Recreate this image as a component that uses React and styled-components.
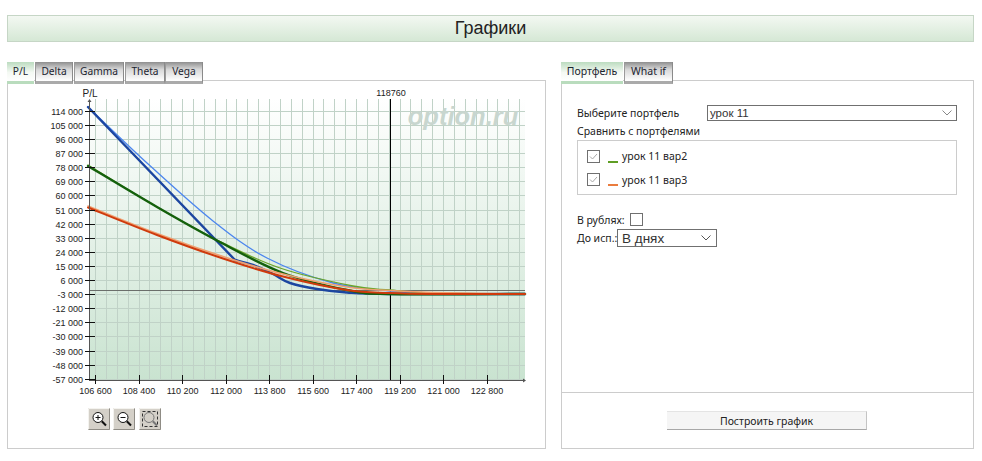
import React from 'react'
import styled, { createGlobalStyle } from 'styled-components'

const GlobalStyle = createGlobalStyle`
  html, body {
    margin: 0;
    padding: 0;
    background: #fff;
    font-family: "Noto Sans", "Liberation Sans", sans-serif;
    color: #222;
  }
`

const Page = styled.div`
  width: 982px;
  height: 461px;
  box-sizing: border-box;
  padding: 15px 8px 0 7px;
  overflow: hidden;
`

const Header = styled.h1`
  margin: 0 0 20px;
  height: 27px;
  box-sizing: border-box;
  border: 1px solid #c6d6c6;
  background: linear-gradient(#f3f8f2, #d5e8d5);
  font: 400 18px/25px "Liberation Sans", sans-serif;
  color: #222;
  text-align: center;
`

const Columns = styled.div`
  display: flex;
  gap: 15px;
  align-items: flex-start;
`

const Column = styled.section`
  width: ${p => p.$width}px;
  flex: none;
`

const TabStrip = styled.div`
  display: flex;
  height: 22px;
  margin-bottom: -4px;
  position: relative;
`

const Tab = styled.div`
  box-sizing: border-box;
  width: ${p => p.$width}px;
  height: 22px;
  margin-right: ${p => p.$gap || 0}px;
  padding-top: 2px;
  text-align: center;
  font: 400 ${p => p.$size || 10.5}px/15px "Noto Sans", sans-serif;
  color: #1c2430;
  border-bottom: 3px solid ${p => (p.$active ? '#b9dcbd' : '#aaaaaa')};
  border-left: ${p => (p.$active ? '0' : '1px solid #9a9a9a')};
  border-right: ${p => (p.$active ? '0' : '1px solid #8a8a8a')};
  background: ${p =>
    p.$active
      ? 'linear-gradient(#bcdcc0, #f4f9f3 55%, #ffffff)'
      : 'linear-gradient(#8f8f8f, #d8d8d8 40%, #ffffff)'};
`

const Panel = styled.div`
  box-sizing: border-box;
  height: 369px;
  border: 1px solid #cccccc;
  display: flex;
  flex-direction: column;
`

const ChartWrap = styled.div`
  height: 366px;
`

const ChartSvg = styled.svg`
  display: block;
  text {
    font: 9px "Liberation Sans", sans-serif;
    fill: #222;
  }
`

const FormBody = styled.div`
  flex: 1;
  padding: 23px 16px 0 15px;
  font: 400 10.5px/14px "Noto Sans", sans-serif;
  color: #222;
`

const FieldRow = styled.div`
  display: flex;
  align-items: center;
  height: ${p => p.$height || 17}px;
`

const RowLabel = styled.span`
  width: ${p => p.$width}px;
  flex: none;
  white-space: nowrap;
`

const SelectBox = styled.div`
  box-sizing: border-box;
  width: ${p => p.$width}px;
  height: ${p => p.$height}px;
  border: 1px solid #707070;
  display: flex;
  align-items: center;
  justify-content: space-between;
  padding: 0 4px 0 ${p => p.$pad}px;
  font: 400 ${p => p.$size}px "Liberation Sans", sans-serif;
  color: #333;
`

const CompareLabel = styled.div`
  height: 19px;
  line-height: 20px;
`

const CompareBox = styled.div`
  box-sizing: border-box;
  height: 55px;
  border: 1px solid #cccccc;
  padding: 9px 9px 0;
  display: flex;
  flex-direction: column;
  gap: 10px;
`

const CompareRow = styled.div`
  display: flex;
  align-items: center;
  height: 13px;
`

const CompareName = styled.span`
  margin-bottom: ${p => p.$lift}px;
`

const Check = styled.span`
  box-sizing: border-box;
  width: 13px;
  height: 13px;
  flex: none;
  border: 1px solid #707070;
  display: flex;
  align-items: center;
  justify-content: center;
  background: #fff;
`

const Swatch = styled.span`
  width: 10px;
  height: 2px;
  margin: 10px 4px 0 8px;
  flex: none;
  background: ${p => p.$color};
`

const RubleRow = styled.div`
  display: flex;
  align-items: center;
  gap: 5px;
  height: 13px;
  margin-top: 18px;
`

const ExpiryRow = styled.div`
  display: flex;
  align-items: center;
  height: 18px;
  margin-top: 3px;
`

const Footer = styled.div`
  height: 56px;
  flex: none;
  box-sizing: border-box;
  border-top: 1px solid #cccccc;
  display: flex;
  justify-content: center;
  padding: 18px 1px 0 0;
`

const BuildButton = styled.button`
  box-sizing: border-box;
  width: 200px;
  height: 19px;
  padding: 0;
  border: 0;
  border-bottom: 1px solid #a8a8a8;
  border-right: 1px solid #c4c4c4;
  border-top: 1px solid #e4e4e4;
  background: #f5f5f5;
  font: 400 10.5px/16px "Noto Sans", sans-serif;
  color: #222;
`

// chart coords match the page, the viewBox shifts them into the panel
const OFFSET_X = 8
const OFFSET_Y = 81

const PLOT = { left: 89, right: 525, top: 99, bottom: 380 }
const yTicks = Array.from({ length: 20 }, (_, i) => 114000 - i * 9000)
const xTicks = Array.from({ length: 10 }, (_, i) => 106600 + i * 1800)
const yAt = v => 111.3 + ((114000 - v) * 268) / 171000
const xAt = v => 95.6 + ((v - 106600) * 43.5) / 1800
const crisp = n => Math.floor(n) + 0.5
const fmt = n => String(n).replace(/\B(?=(\d{3})+(?!\d))/g, ' ')

const smooth = pts => {
  let d = `M${pts[0][0]} ${pts[0][1]}`
  for (let i = 0; i < pts.length - 1; i++) {
    const p0 = pts[i - 1] || pts[i]
    const p1 = pts[i]
    const p2 = pts[i + 1]
    const p3 = pts[i + 2] || p2
    const c1x = p1[0] + (p2[0] - p0[0]) / 6
    const c1y = p1[1] + (p2[1] - p0[1]) / 6
    const c2x = p2[0] - (p3[0] - p1[0]) / 6
    const c2y = p2[1] - (p3[1] - p1[1]) / 6
    d += ` C${c1x} ${c1y} ${c2x} ${c2y} ${p2[0]} ${p2[1]}`
  }
  return d
}

const blueThin = [[88, 107], [147, 163], [213, 221], [267, 258], [333, 283], [390, 291], [433, 293], [525, 294]]
const greenThin = [[88, 165], [157, 207], [217, 240], [280, 268], [353, 286], [390, 290], [433, 293], [525, 294]]
const orangeThin = [[88, 206], [157, 233.5], [223, 256.5], [283, 274], [347, 287], [390, 290.5], [433, 292.5], [525, 294]]
const greenThick = [[88, 166], [157, 207], [217, 240.5], [283, 273], [347, 290], [390, 294], [525, 294]]
const redThick = [[88, 207.5], [157, 235], [223, 258.5], [283, 276.5], [347, 290], [390, 293], [433, 294], [525, 294]]
const blueBend = [[235, 260], [253, 265], [273, 274], [290, 283], [317, 289], [347, 292.5], [390, 294], [525, 294]]

const vGrid = Array.from({ length: 40 }, (_, i) => 95.6 + i * 10.875).filter(x => x <= PLOT.right)

function PlChart() {
  return (
    <ChartSvg width="537" height="366" viewBox={`${OFFSET_X} ${OFFSET_Y} 537 366`}>
      <defs>
        <linearGradient id="plotBg" x1="0" y1="0" x2="0" y2="1">
          <stop offset="0" stopColor="#ffffff" />
          <stop offset="1" stopColor="#c9e3d0" />
        </linearGradient>
      </defs>
      <rect x={PLOT.left} y={PLOT.top} width={PLOT.right - PLOT.left} height={PLOT.bottom - PLOT.top} fill="url(#plotBg)" />

      {yTicks.map(v => (
        <line key={v} x1={PLOT.left} x2={PLOT.right} y1={crisp(yAt(v))} y2={crisp(yAt(v))} stroke="#c0d2c7" />
      ))}
      {vGrid.map(x => (
        <line key={x} x1={crisp(x)} x2={crisp(x)} y1={PLOT.top} y2={PLOT.bottom} stroke="#c0d2c7" />
      ))}

      <text x="463" y="125" textAnchor="middle" style={{ font: 'italic 700 25.5px "Liberation Sans", sans-serif', fill: '#c8d6cf' }}>
        option.ru
      </text>

      <line x1={PLOT.left} x2={PLOT.right} y1="290.5" y2="290.5" stroke="#6b6f6b" />
      <line x1="390.5" x2="390.5" y1={PLOT.top} y2={PLOT.bottom} stroke="#000" />

      <g fill="none" strokeLinecap="round" strokeLinejoin="round">
        <path d={smooth(blueThin)} stroke="#4c86ee" strokeWidth="1.3" />
        <path d={smooth(greenThin)} stroke="#6aa52a" strokeWidth="1.3" />
        <path d="M88 107 L235 260" stroke="#1c46a0" strokeWidth="2.4" />
        <path d={smooth(blueBend)} stroke="#1c46a0" strokeWidth="2.4" />
        <path d={smooth(greenThick)} stroke="#14600c" strokeWidth="2.4" />
        <path d={smooth(orangeThin)} stroke="#f0a070" strokeWidth="1.6" />
        <path d={smooth(redThick)} stroke="#cf3a0c" strokeWidth="2" />
      </g>

      <line x1="89.5" x2="89.5" y1="101" y2="380" stroke="#555" />
      <line x1="89" x2="525" y1="380.5" y2="380.5" stroke="#555" />
      <path d="M87.5 102 L89.5 99 L91.5 102 Z" fill="#555" />
      <path d="M523 378.5 L526 380.5 L523 382.5 Z" fill="#555" />

      {yTicks.map(v => (
        <g key={v}>
          <line x1="85" x2="95" y1={crisp(yAt(v))} y2={crisp(yAt(v))} stroke="#111" />
          <text x="83" y={yAt(v) + 3.5} textAnchor="end">{fmt(v)}</text>
        </g>
      ))}
      {xTicks.map(v => (
        <g key={v}>
          <line x1={crisp(xAt(v))} x2={crisp(xAt(v))} y1="375" y2="384" stroke="#111" />
          <text x={xAt(v)} y="394" textAnchor="middle">{fmt(v)}</text>
        </g>
      ))}

      <text x="90" y="97" textAnchor="middle" style={{ fontSize: '10px' }}>P/L</text>
      <text x="391" y="96" textAnchor="middle">118760</text>

      <ZoomButton x={88} kind="in" />
      <ZoomButton x={113} kind="out" />
      <ZoomButton x={139} kind="box" />
    </ChartSvg>
  )
}

function ZoomButton({ x, kind }) {
  const stroke = kind === 'box' ? '#777' : '#111'
  return (
    <g transform={`translate(${x} 408)`}>
      <rect x="0" y="0" width="22" height="22" fill="#d4d0c8" />
      <path d="M0.5 21.5 V0.5 H21.5" fill="none" stroke="#f4f3ef" />
      <path d="M0.5 21.5 H21.5 V0.5" fill="none" stroke="#8f8c85" />
      {kind === 'box' && (
        <rect x="3.5" y="3.5" width="15" height="15" fill="none" stroke="#333" strokeDasharray="3 2" />
      )}
      <circle cx="10" cy="9.5" r="5" fill={kind === 'box' ? '#d4d0c8' : '#fff'} stroke={stroke} />
      <path d="M13.8 13.3 L18 17.5" stroke={stroke} strokeWidth="2" />
      {kind !== 'box' && <path d="M7.5 9.5 H12.5" stroke="#111" />}
      {kind === 'in' && <path d="M10 7 V12" stroke="#111" />}
    </g>
  )
}

const Tick = () => (
  <svg width="9" height="9" viewBox="0 0 9 9">
    <path d="M1 4.5 L3.5 7 L8 2" fill="none" stroke="#a8a8a8" strokeWidth="1" />
  </svg>
)

const Chevron = ({ w = 10, color = '#888' }) => (
  <svg width={w} height="6" viewBox="0 0 10 6">
    <path d="M0.5 0.5 L5 5 L9.5 0.5" fill="none" stroke={color} strokeWidth="1" />
  </svg>
)

export default function App() {
  return (
    <Page>
      <GlobalStyle />
      <Header>Графики</Header>
      <Columns>
        <Column $width={539}>
          <TabStrip>
            <Tab $active $width={27} $gap={1} $size={10.2}>P/L</Tab>
            <Tab $width={38} $gap={1} $size={10.2}>Delta</Tab>
            <Tab $width={50} $gap={1} $size={10.2}>Gamma</Tab>
            <Tab $width={40} $size={10.2}>Theta</Tab>
            <Tab $width={38} $size={10.2}>Vega</Tab>
          </TabStrip>
          <Panel>
            <ChartWrap>
              <PlChart />
            </ChartWrap>
          </Panel>
        </Column>
        <Column $width={413}>
          <TabStrip>
            <Tab $active $width={62} $gap={1}>Портфель</Tab>
            <Tab $width={49}>What if</Tab>
          </TabStrip>
          <Panel>
            <FormBody>
              <FieldRow>
                <RowLabel $width={130}>Выберите портфель</RowLabel>
                <SelectBox $width={250} $height={16} $pad={2} $size={11.5}>
                  урок 11
                  <Chevron />
                </SelectBox>
              </FieldRow>
              <CompareLabel>Сравнить с портфелями</CompareLabel>
              <CompareBox>
                <CompareRow>
                  <Check><Tick /></Check>
                  <Swatch $color="#5f9e24" />
                  <CompareName $lift={2}>урок 11 вар2</CompareName>
                </CompareRow>
                <CompareRow>
                  <Check><Tick /></Check>
                  <Swatch $color="#ea7c3e" />
                  <CompareName $lift={0}>урок 11 вар3</CompareName>
                </CompareRow>
              </CompareBox>
              <RubleRow>
                В рублях:
                <Check />
              </RubleRow>
              <ExpiryRow>
                <RowLabel $width={40}>До исп.:</RowLabel>
                <SelectBox $width={100} $height={18} $pad={4} $size={13.5}>
                  В днях
                  <Chevron w={12} color="#555" />
                </SelectBox>
              </ExpiryRow>
            </FormBody>
            <Footer>
              <BuildButton>Построить график</BuildButton>
            </Footer>
          </Panel>
        </Column>
      </Columns>
    </Page>
  )
}
